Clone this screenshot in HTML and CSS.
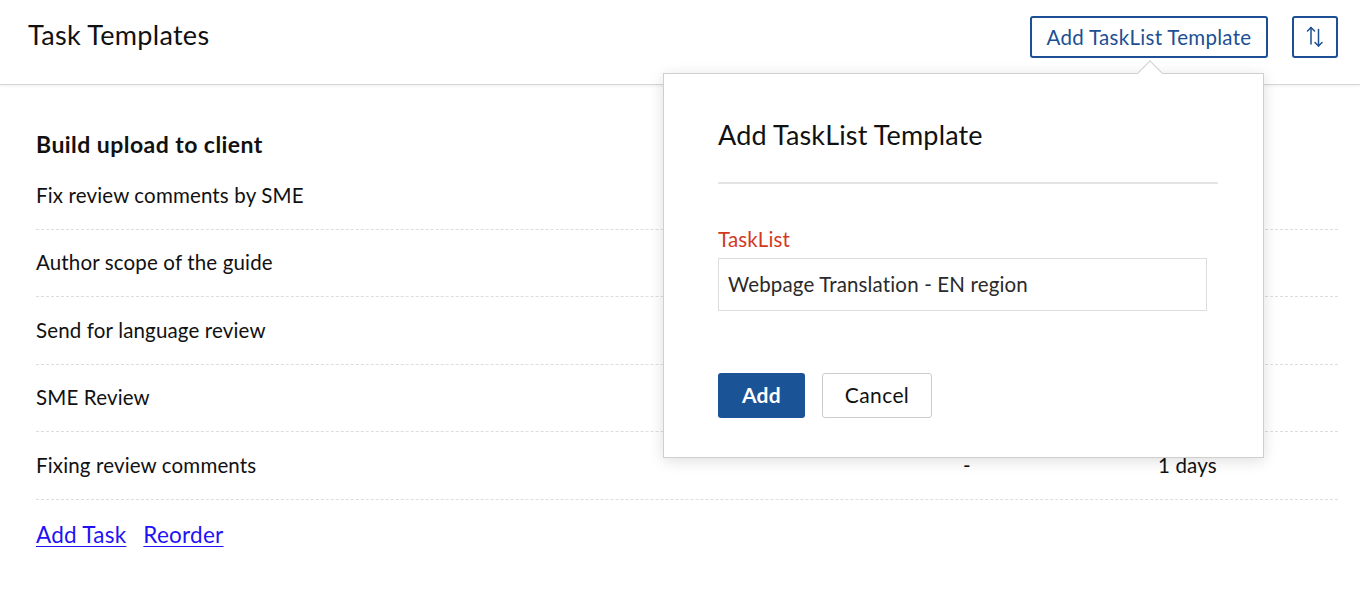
FILE: index.html
```html
<!DOCTYPE html>
<html>
<head>
<meta charset="utf-8">
<link rel="stylesheet" href="styles.css">
</head>
<body>
<header class="topbar">
  <h1 class="page-title">Task Templates</h1>
  <div class="actions">
    <button class="btn-outline">Add TaskList Template</button>
    <button class="btn-icon" aria-label="Sort">
      <svg width="20" height="24" viewBox="0 0 20 24" fill="none" stroke="currentColor" stroke-width="1.5" stroke-linecap="round" stroke-linejoin="round">
        <path d="M6 2.5V19"/>
        <path d="M2.5 6L6 2.5L9.5 6"/>
        <path d="M13.5 4.5V21"/>
        <path d="M10 17.5L13.5 21L17 17.5"/>
      </svg>
    </button>
  </div>
</header>

<main class="content">
  <h2 class="group-title">Build upload to client</h2>
  <div class="task-list">
    <div class="task-row"><span class="task-name">Fix review comments by SME</span></div>
    <div class="task-row"><span class="task-name">Author scope of the guide</span></div>
    <div class="task-row"><span class="task-name">Send for language review</span></div>
    <div class="task-row"><span class="task-name">SME Review</span></div>
    <div class="task-row"><span class="task-name">Fixing review comments</span><span class="task-col">-</span><span class="task-col">1 days</span></div>
  </div>
  <div class="links">
    <a href="#">Add Task</a>
    <a href="#">Reorder</a>
  </div>
</main>

<div class="popover">
  <span class="popover-arrow"></span>
  <h3 class="popover-title">Add TaskList Template</h3>
  <hr class="popover-rule">
  <label class="field-label">TaskList</label>
  <div class="field-input">Webpage Translation - EN region</div>
  <div class="popover-buttons">
    <button class="btn-primary">Add</button>
    <button class="btn-secondary">Cancel</button>
  </div>
</div>
</body>
</html>
```

FILE: styles.css
```css
* { box-sizing: border-box; }

html, body {
  margin: 0;
  padding: 0;
  background: #fff;
}

body {
  font-family: Lato, "Open Sans", "Liberation Sans", sans-serif;
  color: #111;
  position: relative;
  width: 1360px;
  height: 592px;
  overflow: hidden;
}

.topbar {
  height: 85px;
  display: flex;
  align-items: flex-start;
  justify-content: space-between;
  padding: 16px 22px 0 28px;
  border-bottom: 1px solid #d6d6d6;
  box-shadow: 0 1px 3px rgba(0, 0, 0, 0.07);
}

.page-title {
  margin: 0;
  font-size: 27px;
  letter-spacing: 0.3px;
  font-weight: 400;
  line-height: 38px;
  color: #111;
}

.actions {
  display: flex;
  gap: 24px;
}

.btn-outline {
  height: 42px;
  width: 238px;
  border: 2px solid #1c4f93;
  border-radius: 3px;
  background: #fff;
  color: #1c4f93;
  font-family: inherit;
  font-size: 20.5px;
  letter-spacing: 0.3px;
  padding: 0;
}

.btn-icon {
  width: 46px;
  height: 42px;
  border: 2px solid #1c4f93;
  border-radius: 3px;
  background: #fff;
  color: #1c4f93;
  display: flex;
  align-items: center;
  justify-content: center;
  padding: 0;
}

.content {
  padding: 44px 22px 0 36px;
}

.group-title {
  margin: 0 0 3px;
  font-size: 23px;
  letter-spacing: 0.45px;
  font-weight: 700;
  line-height: 30px;
}

.task-row {
  height: 67.5px;
  display: grid;
  grid-template-columns: 927px 195px 1fr;
  align-items: center;
  border-bottom: 1.5px dashed #dddddd;
  font-size: 20.5px;
  letter-spacing: 0.15px;
  padding-bottom: 1px;
}

.links {
  margin-top: 20px;
  display: flex;
  gap: 17px;
  font-size: 22.5px;
  letter-spacing: 0.25px;
  line-height: 30px;
}

.links a {
  color: #1f12f5;
  text-decoration: underline;
  text-underline-offset: 3px;
  text-decoration-thickness: 1px;
}

.popover {
  position: absolute;
  left: 663px;
  top: 73px;
  width: 601px;
  height: 385px;
  background: #fff;
  border: 1px solid #cfcfcf;
  box-shadow: 0 3px 14px rgba(0, 0, 0, 0.13);
  padding: 45px 45px 0 54px;
}

.popover-arrow {
  position: absolute;
  left: 477px;
  top: -10px;
  width: 18px;
  height: 18px;
  background: #fff;
  border-left: 1px solid #cfcfcf;
  border-top: 1px solid #cfcfcf;
  transform: rotate(45deg);
}

.popover-title {
  margin: 0;
  font-size: 27px;
  letter-spacing: 0.15px;
  font-weight: 400;
  line-height: 32px;
  color: #111;
}

.popover-rule {
  margin: 31px 0 0;
  border: 0;
  height: 2px;
  background: #e4e4e4;
}

.field-label {
  display: block;
  margin-top: 43px;
  font-size: 20.5px;
  letter-spacing: 0.15px;
  line-height: 24px;
  color: #d2391f;
}

.field-input {
  margin-top: 7px;
  width: 489px;
  height: 53px;
  border: 1px solid #dcdcdc;
  padding: 0 9px 2px;
  display: flex;
  align-items: center;
  font-size: 20.5px;
  letter-spacing: 0.15px;
  color: #2a2a2a;
}

.popover-buttons {
  margin-top: 62px;
  display: flex;
  gap: 17px;
}

.btn-primary {
  width: 87px;
  height: 45px;
  background: #1b5397;
  color: #fff;
  border: 0;
  border-radius: 3px;
  font-family: inherit;
  font-size: 21px;
  letter-spacing: 0.3px;
  font-weight: 700;
  padding: 0 0 2px;
}

.btn-secondary {
  width: 110px;
  height: 45px;
  background: #fff;
  color: #111;
  border: 1px solid #cccccc;
  border-radius: 3px;
  font-family: inherit;
  font-size: 21px;
  letter-spacing: 0.4px;
  padding: 0 0 2px;
}
```
